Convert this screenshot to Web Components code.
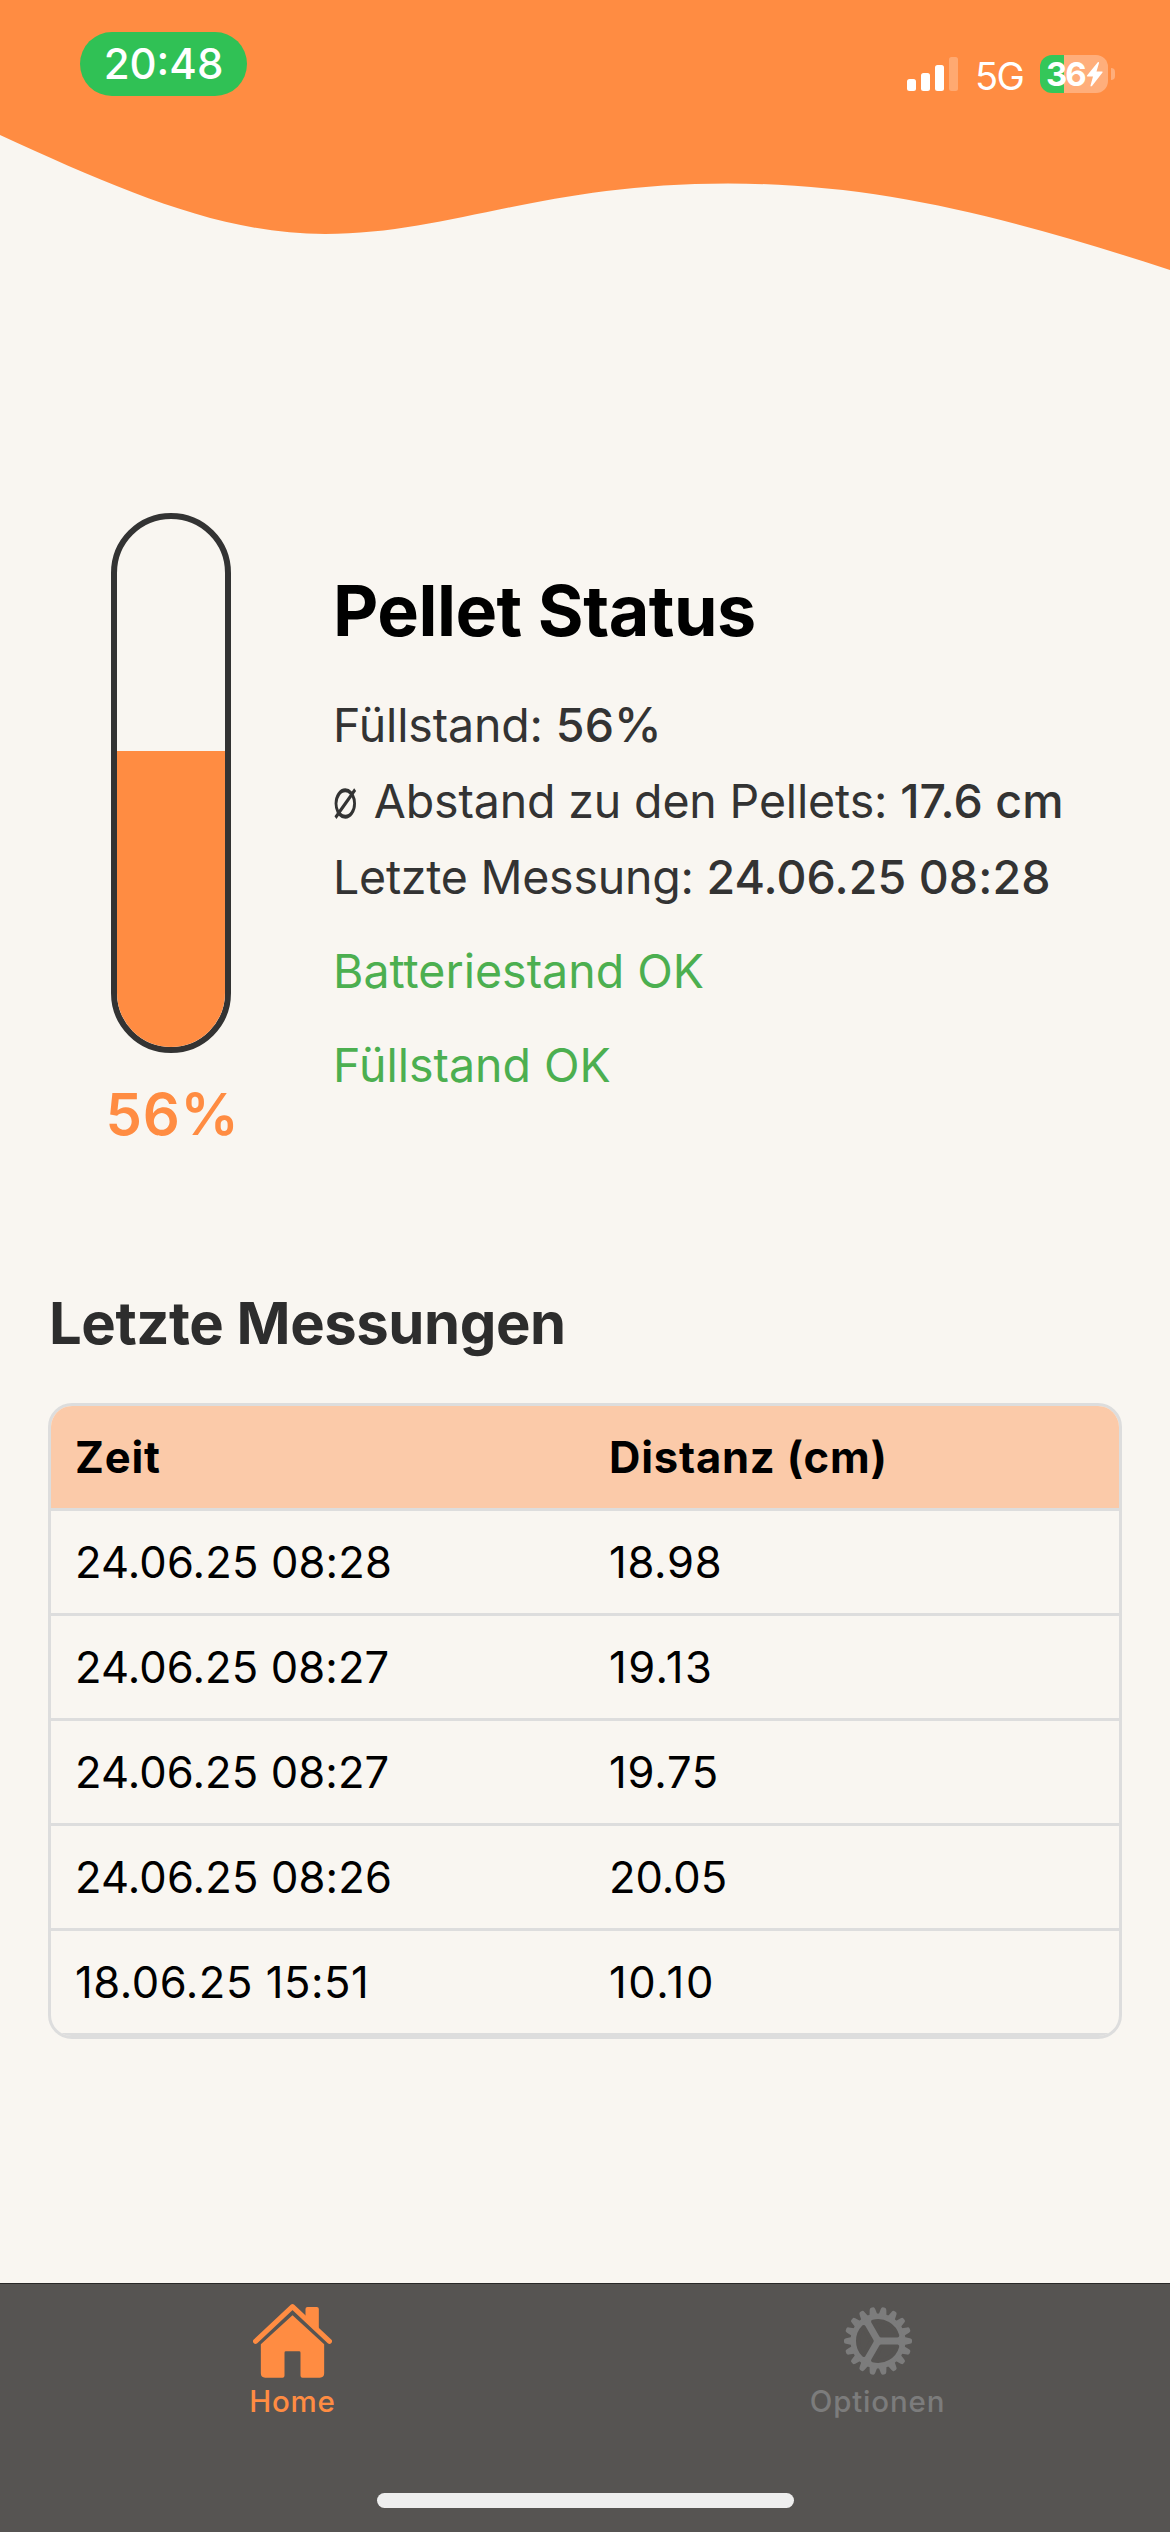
<!DOCTYPE html>
<html lang="de">
<head>
<meta charset="utf-8">
<title>Pellet Status</title>
<style>
  body { margin: 0; background: #f9f6f1; font-family: Inter, "Liberation Sans", sans-serif; color: #000; }
</style>
</head>
<body>
<pellet-app></pellet-app>
<script>
const define = (name, html, init) => {
  const template = document.createElement('template');
  template.innerHTML = html;
  customElements.define(name, class extends HTMLElement {
    constructor() {
      super();
      this.attachShadow({ mode: 'open' }).append(template.content.cloneNode(true));
    }
    connectedCallback() { if (init) init(this, this.shadowRoot); }
  });
};

define('status-bar', `
<style>
  :host { display: flex; justify-content: space-between; align-items: flex-start; padding: 32px 55px 0 80px; height: 64px; color: #fff; }
  .time { width: 167px; height: 64px; border-radius: 32px; background: #30c155; text-align: center; font-size: 42px; line-height: 64px; font-weight: 500; letter-spacing: 0; }
  .right { display: flex; align-items: center; height: 38px; padding-top: 23px; }
  .bars { display: block; width: 51px; height: 34px; margin-right: 17px; }
  .net { font-size: 38px; line-height: 38px; width: 48px; margin-right: 17px; padding-top: 3px; font-weight: 430; letter-spacing: -1.6px; white-space: nowrap; }
  .cell { display: flex; align-items: center; box-sizing: border-box; width: 68px; height: 38px; padding-left: 6px; border-radius: 12px; background: linear-gradient(90deg, #34c759 24px, #ffae7b 24px); font-size: 33px; font-weight: 700; line-height: 38px; letter-spacing: -2px; }
  .bolt { width: 17px; height: 26px; flex: none; margin-left: 1.5px; }
  .nub { width: 4px; height: 12px; margin-left: 3px; border-radius: 0 4px 4px 0; background: #ffae7b; }
</style>
<div class="time">20:48</div>
<div class="right">
  <svg class="bars" viewBox="0 0 51 34" fill="#fff">
    <rect x="0" y="22" width="9" height="12" rx="2.5"/><rect x="14" y="16" width="9" height="18" rx="2.5"/>
    <rect x="28" y="8" width="9" height="26" rx="2.5"/><rect x="42" y="0" width="9" height="34" rx="2.5" opacity=".25"/>
  </svg>
  <div class="net">5G</div>
  <div class="cell">36<svg class="bolt" viewBox="0 0 17 26" fill="#fff"><path d="M12 1 1 14.5Q.5 15.5 1.5 15.5H7L4.500 24.500Q4.500 26 6 25L16.500 11.500Q17 10.500 16 10.500H10.500L13 2Q13 .5 12 1Z"/></svg></div>
  <div class="nub"></div>
</div>`);

define('wave-header', `
<style>
  :host { display: grid; height: 270px; }
  svg, slot { grid-area: 1 / 1; display: block; }
</style>
<svg width="1170" height="270" viewBox="0 0 1170 270"><path fill="#ff8c42" d="M0 0H1170V270C1010 218 880 183.500 728 183.500C540 183.500 450 234 325 234C220 234 120 190 0 135Z"/></svg>
<slot></slot>`);

define('level-tank', `
<style>
  :host { display: flex; flex-direction: column; align-items: center; width: 150px; }
  .tube { box-sizing: border-box; width: 120px; height: 540px; border: 6px solid #333; border-radius: 60px; overflow: hidden; display: flex; flex-direction: column; justify-content: flex-end; }
  .fill { background: #ff8c42; }
  .value { margin-top: 26px; padding-left: 3px; font-size: 58px; line-height: 70px; font-weight: 570; color: #ff8c42; letter-spacing: 0.8px; white-space: nowrap; }
</style>
<div class="tube"><div class="fill"></div></div>
<div class="value"></div>`, (el, root) => {
  const level = el.getAttribute('level');
  root.querySelector('.fill').style.height = level + '%';
  root.querySelector('.value').textContent = level + '%';
});

define('status-line', `
<style>
  :host { display: block; font-size: 46.5px; line-height: 76px; color: #333; white-space: nowrap; letter-spacing: -0.15px; }
  :host([ok]) { color: #4caf50; margin-top: 18px; letter-spacing: 0; }
  :host([tight]) { letter-spacing: -0.25px; }
  ::slotted(b) { font-weight: 550; letter-spacing: 0.1px; }
  ::slotted(i) { font-style: normal; font-weight: 450; font-size: 48px; }
  ::slotted(span) { display: inline-block; line-height: 1; transform: translateY(-4px) scale(.88, 1.25); transform-origin: 0 52%; }
</style><slot></slot>`);

define('status-card', `
<style>
  :host { display: flex; align-items: flex-start; padding: 243px 0 0 96px; height: 623px; }
  .info { margin: 58px 0 0 87px; }
  h1 { margin: 0 0 36px; font-size: 70px; line-height: 80px; font-weight: 700; letter-spacing: -0.5px; white-space: nowrap; }
</style>
<level-tank level="56"></level-tank>
<div class="info">
  <h1>Pellet Status</h1>
  <status-line>Füllstand: <b>56</b><i>%</i></status-line>
  <status-line><span>⌀</span> Abstand zu den Pellets: <b>17.6 cm</b></status-line>
  <status-line tight>Letzte Messung: <b>24.06.25 08:28</b></status-line>
  <status-line ok>Batteriestand OK</status-line>
  <status-line ok>Füllstand OK</status-line>
</div>`);

define('measure-row', `
<style>
  :host { display: flex; height: 102px; align-items: center; border-bottom: 3px solid #ddd; font-size: 43.5px; line-height: 102px; }
  :host([head]) { background: #fbcaa9; font-weight: 700; letter-spacing: 0.8px; }
  ::slotted(span) { flex: 1 1 0; box-sizing: border-box; padding-left: 24px; white-space: nowrap; }
</style><slot></slot>`);

define('measure-table', `
<style>
  :host { display: block; padding: 152px 48px 0; }
  h2 { margin: 0 0 45px; padding-left: 1px; font-size: 58px; line-height: 70px; font-weight: 700; color: #2d2d2d; letter-spacing: -0.45px; }
  .box { border: 3px solid #ddd; border-radius: 24px; overflow: hidden; }
</style>
<h2>Letzte Messungen</h2>
<div class="box">
  <measure-row head><span>Zeit</span><span>Distanz (cm)</span></measure-row>
</div>`, (el, root) => {
  const box = root.querySelector('.box');
  // Each cell: text and its tracking in px
  [[['24.06.25 08:28', .15], ['18.98', .7]],
   [['24.06.25 08:27', .12], ['19.13', 1.5]],
   [['24.06.25 08:27', .12], ['19.75', .8]],
   [['24.06.25 08:26', .15], ['20.05', 0]],
   [['18.06.25 15:51', .55], ['10.10', 1.6]]].forEach(cells => {
    const row = document.createElement('measure-row');
    cells.forEach(([text, track]) => {
      const span = document.createElement('span');
      span.textContent = text;
      span.style.letterSpacing = track + 'px';
      row.append(span);
    });
    box.append(row);
  });
});

define('tab-item', `
<style>
  :host { display: flex; flex: 1; flex-direction: column; align-items: center; color: #7c7c7c; font-size: 29.5px; line-height: 36px; font-weight: 450; letter-spacing: .8px; }
  :host([active]) { color: #ff8c42; }
  .icon { display: flex; align-items: center; height: 74px; margin: 20px 0 5px; }
</style>
<div class="icon"><slot name="icon"></slot></div><slot></slot>`);

define('tab-bar', `
<style>
  :host { display: flex; flex-direction: column; box-sizing: border-box; height: 249px; border-top: 1px solid #292827; background: #565452; }
  nav { display: flex; height: 209px; }
  svg { display: block; }
  .home { width: 417px; height: 15px; border-radius: 8px; background: #eee; align-self: center; }
</style>
<nav>
  <tab-item active>
    <svg slot="icon" width="79" height="74" viewBox="67.500 102 237 222" fill="#ff8c42">
      <path d="M75 214 186 110 297 214" fill="none" stroke="#ff8c42" stroke-width="15" stroke-linecap="round" stroke-linejoin="round"/>
      <path d="M225 150V117Q225 111 231 111H259Q265 111 265 117V186Z"/>
      <path d="M186 136 281 223V310Q281 323 268 323H216Q210 323 210 317V248Q210 244 206 244H166Q162 244 162 248V317Q162 323 156 323H104Q91 323 91 310V223Z"/>
    </svg>Home
  </tab-item>
  <tab-item>
    <svg slot="icon" class="gear" width="70" height="70" viewBox="-35 -35 70 70" fill="#7c7c7c"></svg>Optionen
  </tab-item>
</nav>
<div class="home"></div>`, (el, root) => {
  let teeth = '', holes = '';
  for (let k = 0; k < 18; k++) teeth += `<path transform="rotate(${k * 20})" d="M25 -4.200 32 -2.800Q34 -2.400 34 -1V1Q34 2.400 32 2.800L25 4.200Z"/>`;
  for (let k = 0; k < 3; k++) holes += `<path transform="rotate(${k * 120})" d="M3.120 -5.400L19.260 -5.400A20 20 0 0 0 -4.940 -19.380Z"/>`;
  root.querySelector('.gear').innerHTML = `<circle r="27.500"/>${teeth}<g fill="#565452" stroke="#565452" stroke-width="4" stroke-linejoin="round">${holes}</g>`;
});

define('pellet-app', `
<style>
  :host { display: flex; flex-direction: column; width: 1170px; height: 2532px; overflow: hidden; background: #f9f6f1; }
  tab-bar { margin-top: auto; }
</style>
<wave-header><status-bar></status-bar></wave-header>
<status-card></status-card>
<measure-table></measure-table>
<tab-bar></tab-bar>`);
</script>
</body>
</html>
